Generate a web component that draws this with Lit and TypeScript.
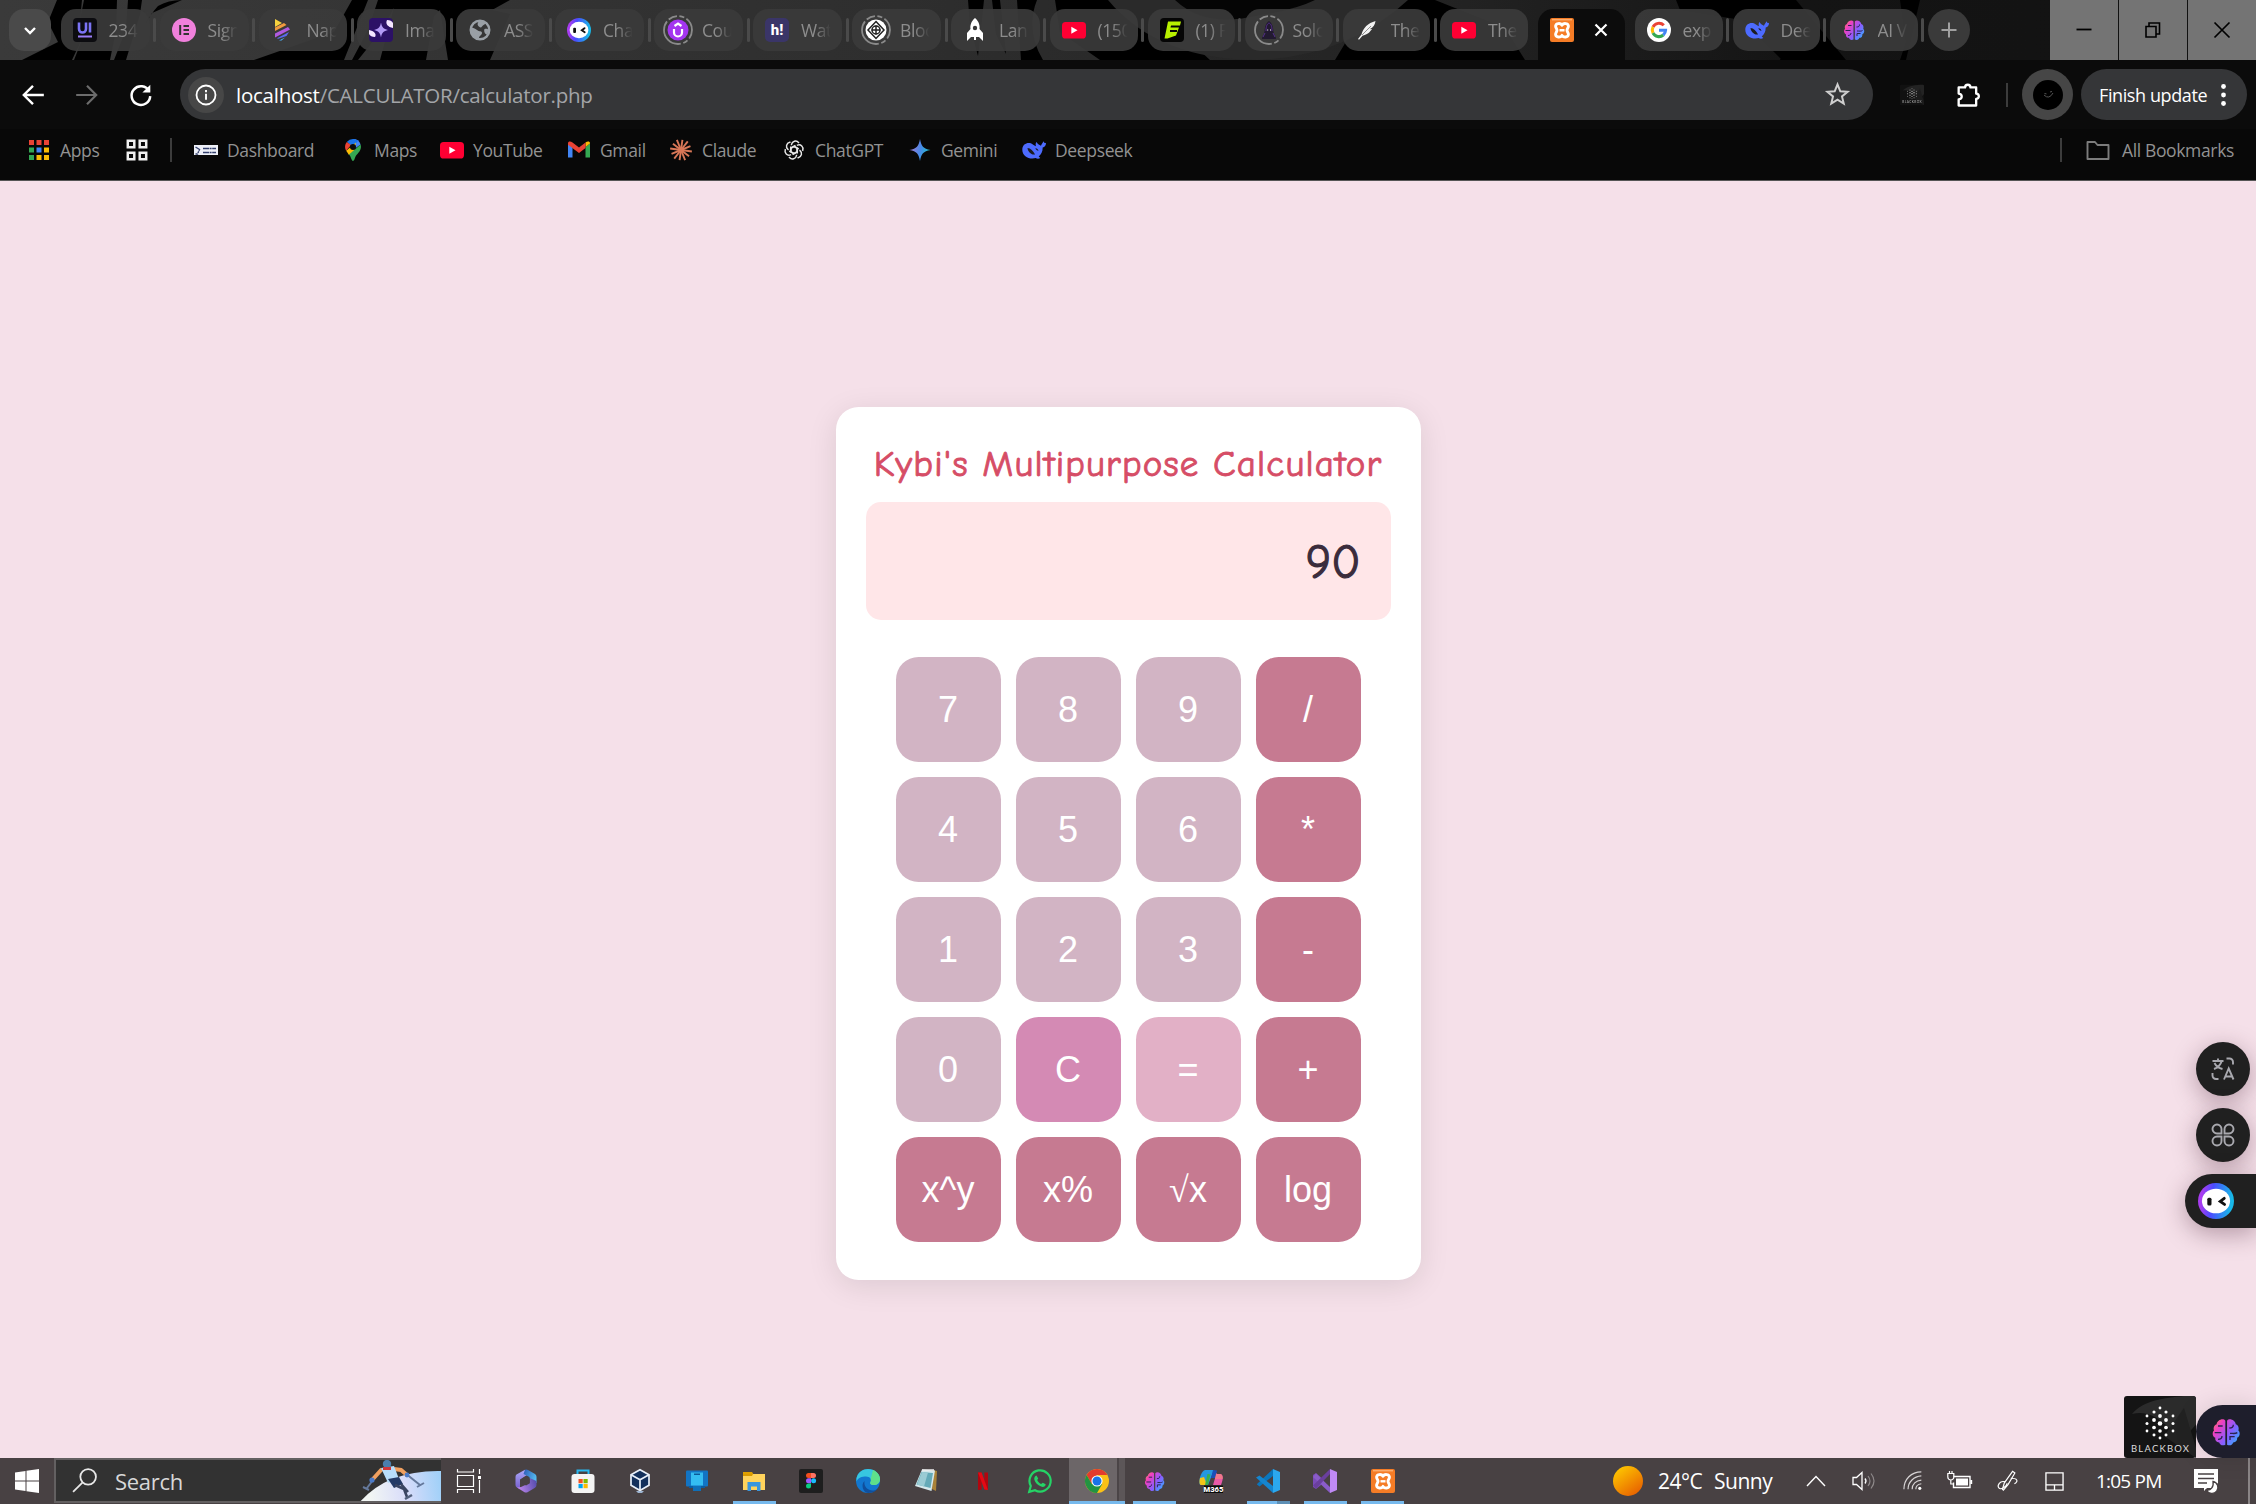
import { LitElement, html, svg, css, nothing, TemplateResult } from "lit";
import { customElement, state } from "lit/decorators.js";
import { classMap } from "lit/directives/class-map.js";
import { styleMap } from "lit/directives/style-map.js";

type Art = ReturnType<typeof svg>;

const icon = (art: Art, size = 24, box = "0 0 24 24"): TemplateResult =>
  html`<svg class="icon" width=${size} height=${size} viewBox=${box} fill="none">${art}</svg>`;

const xampp = svg`<rect width="24" height="24" rx="2" fill="#f57c26"/><path d="M2 1.800h20" stroke="#ffc08a" stroke-width="1"/>
  <path d="M12 7.200C10.500 4.800 6 5 5.600 8c-.2 1.800 1.400 2.600 1.400 4.300s-1.600 2.500-1.400 4.300c.4 3 4.900 3.200 6.400.8 1.500 2.400 6 2.200 6.400-.8.2-1.800-1.400-2.600-1.400-4.300S18.600 9.800 18.400 8c-.4-3-4.900-3.200-6.400-.8z" stroke="#fff" stroke-width="2.900" stroke-linejoin="round"/><path d="M9.500 12.300h5" stroke="#fff" stroke-width="2.400"/>`;
const youtube = svg`<rect x="0" y="4" width="24" height="16.500" rx="3.600" fill="#ff0033"/><path d="M9.300 8.700l6.200 3.500-6.200 3.500z" fill="#fff"/>`;
const whale = svg`<path d="M21.800 3.200c.3 1.900 1.400 2.200 2.200 1.500 0 2.800-1.300 4.400-3.300 4.900 0 4.300-1.500 7-4 8.800l1.600 1.500c-1.600 1.200-3.400.8-4.600.2C7.500 21.800.3 18.500.3 11.700.3 7 3.700 5 6.600 5c3.600 0 4.400 2.300 7.400 3.200-.8-1.800-.2-3.400.6-4.200.8 2 2.400 2.900 4.400 3.800.4-1.200 1.400-3 2.800-4.600z" fill="#4d6bfe"/><path d="M5.500 10c3.200.2 5.600 2.900 7.600 6.400-3.800.8-7.200-2.600-7.600-6.400zM13.300 10.300c1.700-.2 2.700.9 3.200 2.500-1.200.2-2.500-.9-3.200-2.500z" fill="#1c1c22"/>`;
const brain = svg`<defs><linearGradient id="br" x1="0" y1="3" x2="24" y2="20" gradientUnits="userSpaceOnUse"><stop stop-color="#ff9a3c"/><stop offset=".28" stop-color="#f03fc0"/><stop offset=".6" stop-color="#8a5cff"/><stop offset="1" stop-color="#20c0ff"/></linearGradient></defs>
  <path d="M11.500 3.500v18c-2.400 1.200-4.200-.2-4.600-1.700-2 0-3.300-1.400-2.900-3.400-2.200-1.200-2.600-4-1-5.600-.8-2.600.6-4.200 2-4.700.2-2.700 4.700-5.100 6.500-2.600zM12.800 3.500v18c2.400 1.200 4.200-.2 4.600-1.700 2 0 3.300-1.400 2.900-3.400 2.200-1.200 2.600-4 1-5.600.8-2.600-.6-4.200-2-4.700-.2-2.700-4.700-5.100-6.500-2.600z" fill="url(#br)"/>
  <path d="M3.500 12.500h5M6 7.500h3.500M6 17.500c2 0 3-1 3-2.500M14.500 9c2 0 3-.5 3-2.500M15 13c2.500 0 4 .5 5.500-.5M15 18v-2.500h3.500" stroke="#2b2350" stroke-width="1"/>`;
const face = svg`<defs><linearGradient id="fc" x1="2" y1="14" x2="22" y2="16" gradientUnits="userSpaceOnUse"><stop stop-color="#a83cf0"/><stop offset=".35" stop-color="#4a4cff"/><stop offset="1" stop-color="#18b8e8"/></linearGradient></defs>
  <circle cx="12" cy="12" r="12" fill="url(#fc)"/><ellipse cx="12" cy="12" rx="9.400" ry="8.200" fill="#fff"/><rect x="6.200" y="9.800" width="2.800" height="5.200" rx="1" fill="#111"/><path d="M17.500 10.200l-2.700 2.100 2.900 2" stroke="#111" stroke-width="1.900" stroke-linecap="round"/>`;
const ringed = (inner: Art) => svg`<circle cx="12" cy="12" r="14" stroke="#8a8a8a" stroke-width="1.800" stroke-dasharray="9 2.500 5 2.500 34 2.500"/>${inner}`;
const label = (x: number, y: number, size: number, fill: string, t: string) =>
  svg`<text x=${x} y=${y} font-size=${size} fill=${fill} font-family="Roboto, sans-serif" font-weight="800" text-anchor="middle">${t}</text>`;

interface Tab { text: string; art: Art; w: number; active?: boolean; after?: boolean }
const tabs: Tab[] = [
  { text: "234", w: 99, art: svg`<rect width="24" height="24" rx="4" fill="#0c0c10"/><path d="M6 4.500V11a3.500 3.500 0 0 0 7 0V4.500M17 4.500v10" stroke="#7b74f5" stroke-width="2.600"/><path d="M5 18.500h14" stroke="#9a7df8" stroke-width="2.200"/>` },
  { text: "Sign", w: 99, art: svg`<circle cx="12" cy="12" r="12" fill="#f080dc"/><path d="M8.200 7v10M11.500 8H17M11.500 12H17M11.500 16H17" stroke="#333" stroke-width="2"/>` },
  { text: "Nap", w: 98.5, art: svg`<path d="M4 1l7 4-7 4z" fill="#f7d23e"/><path d="M4 9.500l9-4.500 2.500 2L4 13z" fill="#f09a3e"/><path d="M4 15.500l13-6.500 2 2.500L4 19.500z" fill="#b05ae0"/><path d="M6.500 20L18 14l-2.500 4-9 3z" fill="#5a6af0"/><path d="M8 22.500l6-3-3.500 3z" fill="#49b6ff"/>` },
  { text: "Ima", w: 99, art: svg`<rect width="24" height="24" rx="4" fill="#2c1166"/><path d="M0 12c5 1 8 4 6 7-3 0-5-1-6-3zM24 10c-5-1-8-4-6-8 3 0 5 1 6 3z" fill="#f4e6ff"/><path d="M12 4.500c1 5 2.500 6.500 7 7.500-4.500 1-6 2.500-7 7.500-1-5-2.500-6.500-7-7.500 4.500-1 6-2.500 7-7.500z" fill="#b39af5"/>` },
  { text: "ASS", w: 99, art: svg`<circle cx="12" cy="12" r="9.300" stroke="#9aa0a6" stroke-width="2.400"/><path d="M3 9c2 1.500 4 1 6 3s5 .5 5 3-3.500 2.500-3 6c-5 0-9-4-8-12zM11 3c3 0 5 .5 7 2-1 2-3 1.500-4 3.500S11 9 10 7.500 10 4.500 11 3zM16.500 11c2-.5 4 0 4.500 1.500l-2 4c-2 0-3.500-3.500-2.500-5.500z" fill="#9aa0a6"/>` },
  { text: "Chat", w: 99, art: face },
  { text: "Cou", w: 99, art: ringed(svg`<circle cx="12" cy="12" r="10.500" fill="#a435f0"/><path d="M8 11v3.500a4 4 0 0 0 8 0V11M8.500 8L12 5.600 15.500 8" stroke="#fff" stroke-width="2.200"/>`) },
  { text: "Wat", w: 99, art: svg`<rect width="24" height="24" rx="5" fill="#3a3568"/>${label(12, 17, 15, "#fff", "h!")}` },
  { text: "Bloc", w: 99, art: ringed(svg`<circle cx="12" cy="12" r="10.500" fill="#fff"/><path d="M12 3.500l8 8.500-8 8.500L4 12zM12 7.500v9M7.500 12h9" stroke="#222" stroke-width="1.500"/><circle cx="12" cy="12" r="4" stroke="#222" stroke-width="1.500"/>`) },
  { text: "Land", w: 98.5, art: svg`<path d="M12 0c4 3.500 5 7.500 4.500 11l3.500 4v8l-4-4H8l-4 4v-8l3.500-4C7 7.500 8 3.500 12 0z" fill="#fff"/><circle cx="12" cy="10" r="2.200" fill="#383838"/><path d="M12 16v6" stroke="#fff" stroke-width="2"/>` },
  { text: "(150", w: 98, art: youtube },
  { text: "(1) F", w: 97, art: svg`<rect width="24" height="24" rx="4" fill="#050505"/><path d="M8 3.500h13l-1 4h-9l-.5 2h8.500l-3 8-8.500 3h-3z" fill="#b8f000"/><path d="M10 13h7" stroke="#050505" stroke-width="2"/>` },
  { text: "Solo", w: 98, art: ringed(svg`<path d="M5 21c0-3 2-4 2.500-7.500C8 8 9 5 12 3c3 2 4 5 4.500 10.500C17 17 19 18 19 21z" fill="#221a30"/><path d="M9 13c0-5 1-7 3-8 2 1 3 3 3 8M6 19l2-4M18 19l-2-4" stroke="#56308a" stroke-width="1"/><path d="M10.200 12h1M13 12h1" stroke="#fff" stroke-width="1.200"/>`) },
  { text: "The", w: 97.5, art: svg`<path d="M20.500 3C13 5 8 10 6.500 16.500L3 21l1 .8 3.500-4C14 16 15 13.500 17 11c-1 .2-2 .2-2 0 3-1.500 5-4 5.500-8z" fill="#f2f2f2"/><path d="M7 17L16 8" stroke="#777" stroke-width=".8"/>` },
  { text: "The", w: 98, art: youtube, after: true },
  { text: "", w: 96.5, art: xampp, active: true, after: true },
  { text: "exp", w: 98, art: svg`<circle cx="12" cy="12" r="12" fill="#fff"/><path d="M16.800 7.300A6.700 6.700 0 0 0 6 9" stroke="#ea4335" stroke-width="3"/><path d="M6 9a6.700 6.700 0 0 0 0 6" stroke="#fbbc05" stroke-width="3"/><path d="M6 15a6.700 6.700 0 0 0 10.300 2" stroke="#34a853" stroke-width="3"/><path d="M16.300 17a6.700 6.700 0 0 0 2.300-4.800H12" stroke="#4285f4" stroke-width="3"/>` },
  { text: "Dee", w: 97, art: whale },
  { text: "AI V", w: 98, art: brain },
];

const appsArt = svg`${["#ea4335", "#ea4335", "#ea4335", "#34a853", "#4285f4", "#fbbc05", "#34a853", "#fbbc05", "#fbbc05"].map(
  (c, i) => svg`<rect x=${2 + (i % 3) * 7.500} y=${2 + Math.floor(i / 3) * 7.500} width="5" height="5" fill=${c}/>`)}`;

interface Mark { text: string; w: number; art: Art }
const marks: Mark[] = [
  { text: "Dashboard", w: 147, art: svg`<rect y="7" width="24" height="10" fill="#eef0f8"/><path d="M1.500 9l4 2.500-2 4.500H1.500M9 10.500h13M9 14.500h13" stroke="#34406e" stroke-width="1.400" stroke-dasharray="6 .6 2 .6"/>` },
  { text: "Maps", w: 99, art: svg`<path d="M12 1a8 8 0 0 1 7.600 5.400L12 12z" fill="#4285f4"/><path d="M12 1a8 8 0 0 0-6.200 2.900L12 9l5-6.200A8 8 0 0 0 12 1z" fill="#1a73e8"/><path d="M5.800 3.900C3.400 7 3.800 10.500 5.200 12.700L10 7z" fill="#ea4335"/><path d="M5.200 12.700L15 4.500l-2 10-5 2.500z" fill="#fbbc04"/><path d="M19.600 6.400C21 11 18 14 15.500 17c-1.700 2-2 6-3.500 6s-1.700-4-4-6.500z" fill="#34a853"/><circle cx="12" cy="9" r="3" fill="#0a0a0a"/>` },
  { text: "YouTube", w: 127, art: youtube },
  { text: "Gmail", w: 102, art: svg`<path d="M1 5.500v14h4.500V9z" fill="#4285f4"/><path d="M23 5.500v14h-4.500V9z" fill="#34a853"/><path d="M18.500 9L23 5.500C23 3 20.500 3 18.500 4.500z" fill="#fbbc04"/><path d="M1 5.500C1 3 3.500 3 5.500 4.500L12 9.500l6.500-5V10L12 15 1 6.700z" fill="#ea4335"/>` },
  { text: "Claude", w: 113, art: svg`${[0, 30, 60, 90, 120, 150, 180, 210, 240, 270, 300, 330].map(a => svg`<path d="M12 12V${a % 60 ? 1 : 1.800}" transform="rotate(${a + 8} 12 12)" stroke="#d97757" stroke-width="1.900"/>`)}` },
  { text: "ChatGPT", w: 126, art: svg`${[0, 60, 120, 180, 240, 300].map(a => svg`<path d="M12 8.500l3.300 1.900v5.200M9.500 7.200V6.500a4 4 0 0 1 7-2l.5.600" transform="rotate(${a} 12 12)" stroke="#e8e8e8" stroke-width="1.500"/>`)}` },
  { text: "Gemini", w: 114, art: svg`<defs><linearGradient id="gm" x1="2" y1="10" x2="22" y2="14" gradientUnits="userSpaceOnUse"><stop stop-color="#a07ad0"/><stop offset=".5" stop-color="#4a88e8"/><stop offset="1" stop-color="#1cc0c8"/></linearGradient></defs><path d="M12 1c1.300 7.300 3.200 9.600 10.500 11C15.200 13.400 13.300 15.700 12 23c-1.300-7.300-3.200-9.600-10.500-11C8.800 10.600 10.700 8.300 12 1z" fill="url(#gm)"/>` },
  { text: "Deepseek", w: 130, art: whale },
];

interface Pin { art: Art; bar?: boolean; cls?: string; size?: number }
const pins: Pin[] = [
  { art: svg`<path d="M.5 0v3h16V0M.5 6.500h16v11H.5zM.5 24v-3.500h16V24M22.500 0v5M22.500 11v13" stroke="#fff" stroke-width="1.200"/><rect x="21" y="7" width="3" height="3" fill="#fff"/>` },
  { art: svg`<defs><linearGradient id="ca" x1="6" y1="2" x2="6" y2="22" gradientUnits="userSpaceOnUse"><stop stop-color="#a9a4f5"/><stop offset="1" stop-color="#6f55c8"/></linearGradient><linearGradient id="cb" x1="9" y1="4" x2="23" y2="10" gradientUnits="userSpaceOnUse"><stop stop-color="#2f5fb8"/><stop offset="1" stop-color="#58c4f5"/></linearGradient><linearGradient id="cc" x1="3" y1="20" x2="22" y2="14" gradientUnits="userSpaceOnUse"><stop stop-color="#c58af0"/><stop offset="1" stop-color="#5a4fb0"/></linearGradient></defs>
    <path d="M11 .8L2.500 5.500Q1.500 6.200 1.500 8v8q0 1.800 1.500 2.600l3 1.600V10.500l7-4.500z" fill="url(#ca)"/><path d="M11 .8q1.500-.6 3 .2l7 4q1.500 1 1.500 2.800V14l-7-4.500V8L9.500 5z" fill="url(#cb)"/><path d="M22.500 12v4q0 1.800-1.500 2.700l-7.500 4.500q-1.500.7-3 0L3 18.600l4-.6 8.500-4V9z" fill="url(#cc)"/><path d="M12 7.300l3.800 2.300v4.700L12 16.600l-3.800-2.300V9.600z" fill="#484143"/>` },
  { art: svg`<path d="M6.500 7V1.500h11V7" stroke="#28b8f0" stroke-width="2"/><rect x=".5" y="5" width="23" height="19" rx="3" fill="#f4f4f4"/><rect x="7.500" y="10" width="4.200" height="4.200" fill="#f25022"/><rect x="12.500" y="10" width="4.200" height="4.200" fill="#7fba00"/><rect x="7.500" y="15" width="4.200" height="4.200" fill="#00a4ef"/><rect x="12.500" y="15" width="4.200" height="4.200" fill="#ffb900"/>` },
  { art: svg`<path d="M12 .8l9 5v10.400L12 21.500l-9-5.300V5.800z" fill="#12305c" stroke="#e8f0fa" stroke-width="1.700"/><path d="M3 5.800l9 5 9-5M12 10.800v10.700" stroke="#e8f0fa" stroke-width="1.700"/><path d="M8 22h8l-2 2h-4z" fill="#9db4d0"/>` },
  { art: svg`<rect x="1" y="1.500" width="22" height="16" rx="1" fill="#1274c4"/><rect x="4" y="17" width="16" height="2" fill="#0c5ca0"/><rect x="6" y="3.500" width="12" height="13" fill="#34bdf2"/><rect x="9" y="4.500" width="6" height="1.500" fill="#0b5a9a"/><rect x="8" y="17" width="8" height="5" fill="#0f6fb8"/>` },
  { bar: true, art: svg`<path d="M1 3h9l2 3H1z" fill="#e0a000"/><path d="M1 5h22v16H1z" fill="#ffd35c"/><path d="M1 5h10l-1 2H1z" fill="#d99a00"/><path d="M5.500 22v-9h13v9H15v-4.500H9V22z" fill="#3a96dd"/>` },
  { art: svg`<rect width="24" height="24" rx="2" fill="#1e1e1e"/><path d="M12 4H9.500a2.500 2.500 0 0 0 0 5H12z" fill="#f24e1e"/><path d="M12 4h2.500a2.500 2.500 0 0 1 0 5H12z" fill="#ff7262"/><path d="M12 9.300H9.500a2.500 2.500 0 0 0 0 5H12z" fill="#a259ff"/><circle cx="14.600" cy="11.800" r="2.500" fill="#1abcfe"/><path d="M12 14.600H9.500a2.500 2.500 0 1 0 2.500 2.500z" fill="#0acf83"/>` },
  { art: svg`<circle cx="12" cy="12" r="12" fill="#1277cf"/><path d="M.5 9C2 3 7 0 12 0c7 0 12 5 12 10 0 4-3 6-6 6-3.500 0-4.500-1.500-3.500-3 1.500-2.500-.5-5.500-4.500-5.500-4 0-8 1-9.500 5z" fill="#37c6e0"/><path d="M17 1c4.500 2 7 5.500 7 9 0 4-3 6-6 6-3.500 0-4.500-1.500-3.500-3 .5-1 .6-2 .2-3z" fill="#5fe08a"/><path d="M8.500 12c-1 6 4 10 9 9.500 2-.2 3.500-1 4.500-2C19.500 22.500 16 24 12 24c-5 0-7.500-9-3.500-12z" fill="#104f9c"/>` },
  { art: svg`<path d="M19 1l4 1-1 20-4-2z" fill="#a98238"/><path d="M8 .5l13 1L17.500 22 1 17z" fill="#d5e8ec"/><path d="M7.500 3l11.500 1-2.500 15L2.500 15.500z" fill="#64aab8"/><path d="M8 3l6 .5-4 14-7-2z" fill="#9acbd4"/><path d="M8 1h12" stroke="#eee" stroke-width="1.500"/>` },
  { art: svg`<path d="M7 3.500h3.600v17L7 21zM13.400 3.500H17V21l-3.600-.5z" fill="#b1060f"/><path d="M7 3.500h3.600L17 21l-3.600-.5z" fill="#e50914"/>` },
  { art: svg`<path d="M1.200 22.800l1.600-5.800a10.600 10.600 0 1 1 4.200 4.200z" stroke="#25d366" stroke-width="2.200"/><path d="M8.500 6.500l1.700 3-1 1.600c.8 1.900 2 3 3.900 3.900l1.700-1.300 2.900 1.600c-.2 2.600-2.500 3-4.600 2.300-3.500-1.200-6-3.900-6.800-7-.3-1.700.6-3.900 2.200-4.100z" fill="#25d366"/>` },
  { bar: true, cls: "on", art: svg`<circle cx="12" cy="12" r="12" fill="#fbc116"/><path d="M1.600 6A12 12 0 0 1 22.400 6H12l-5.200 9z" fill="#e33b2e"/><path d="M1.600 6A12 12 0 0 0 12 24l5.200-9L12 12 6.800 15z" fill="#229342"/><circle cx="12" cy="12" r="5.600" fill="#fff"/><circle cx="12" cy="12" r="4.500" fill="#1a73e8"/>` },
  { bar: true, art: brain, size: 23 },
  { art: svg`<path d="M6 1h9l-6 15H1C-1 12 2 2 6 1z" fill="#2498e0"/><path d="M1 9l4-1 3 8H2c-1.500 0-2-3-1-7z" fill="#f2c418"/><path d="M8.500 5l3 .5L9 16H6z" fill="#38b04c"/><path d="M15 1l3 4h3c3 0 3.500 4 2 8l-1 3h-8l3-10z" fill="#e85aa8"/><path d="M14 1l4 .5L16 9h-4z" fill="#1a4fb8"/><path d="M17 5h4c2 0 3 2 2.500 5H16z" fill="#f0788a"/><rect x="5" y="16.500" width="19" height="7.500" fill="#0a0a0a"/>${label(14.500, 23, 7.600, "#fff", "M365")}` },
  { bar: true, cls: "split", art: svg`<path d="M17 0l7 3v18l-7 3z" fill="#2ba8ef"/><path d="M17 0v7L3.500 17.500 1 15.500 1 15z" fill="#0a76bd"/><path d="M17 24v-7L3.500 6.500 0 8.500z" fill="#1585cf"/>` },
  { bar: true, art: svg`<path d="M0 6l3-2 5 4.500V16l-5 4-3-2z" fill="#7a4bb8"/><path d="M3 4.500L20 21l-3 3L0 8z" fill="#8a5cc8"/><path d="M3 19.500L17 5V0L0 16.500z" fill="#6a3f9e"/><path d="M17 0l7 3v18l-7 3z" fill="#c08af5"/>` },
  { bar: true, art: xampp },
];

const keys: { t: string; k: string }[] = [
  ..."789".split("").map(t => ({ t, k: "num" })), { t: "/", k: "op" },
  ..."456".split("").map(t => ({ t, k: "num" })), { t: "*", k: "op" },
  ..."123".split("").map(t => ({ t, k: "num" })), { t: "-", k: "op" },
  { t: "0", k: "num" }, { t: "C", k: "clear" }, { t: "=", k: "eq" }, { t: "+", k: "op" },
  { t: "x^y", k: "op" }, { t: "x%", k: "op" }, { t: "√x", k: "op" }, { t: "log", k: "op" },
];

const blackbox = svg`<rect width="72" height="62" rx="3" fill="#141414"/><path d="M8 18C20 4 40 2 60 0h9q3 0 3 3v25C50 60 44 10 8 18z" fill="#2b2b2b"/><path d="M40 40L60 12l12 40v10z" fill="#222"/>
  ${[[36, 12], [30, 16], [42, 16], [36, 20], [23, 20], [49, 20], [30, 24], [42, 24], [36, 27.500], [23, 27.500], [49, 27.500], [30, 31.500], [42, 31.500], [36, 35], [23, 35], [49, 35], [30, 39], [42, 39], [36, 42]].map(
    ([x, y]) => svg`<circle cx=${x} cy=${y} r=${2.300 - Math.hypot(x - 36, y - 27) * 0.06} fill="#fff"/>`)}
  <text x="36" y="55.500" font-size="9.500" fill="#ddd" font-family="Lato, sans-serif" text-anchor="middle" textLength="58">BLACKBOX</text>`;

@customElement("app-root")
export class AppRoot extends LitElement {
  @state() private shown = "90";

  static styles = css`
    :host { display: block; width: 2256px; height: 1504px; overflow: hidden; font-family: "Segoe UI", "Open Sans", "Noto Sans", sans-serif; }
    * { box-sizing: border-box; }
    svg { display: block; flex: none; overflow: visible; }
    .screen { display: flex; flex-direction: column; width: 2256px; height: 1504px; background: #f5e0e9; position: relative; }
    .strip { height: 60px; background: #1c1c1c; position: relative; flex: none; }
    .strip > .bg { position: absolute; left: 0; top: 0; }
    .row { position: relative; display: flex; height: 60px; padding: 0 0 0 9px; }
    .drop { width: 42px; height: 42px; margin: 9px 9.500px 0 0; border-radius: 15px; background: #4a4a4a; display: grid; place-items: center; }
    .tab { height: 60px; padding-top: 9px; display: flex; flex: none; }
    .pill { flex: 1; height: 42px; border-radius: 15px; background: rgba(58, 58, 58, .93); display: flex; align-items: center; padding-left: 12px; gap: 12px; overflow: hidden; }
    .cap { width: 31px; overflow: hidden; white-space: nowrap; color: #8d8d8d; font-size: 17.500px; letter-spacing: -.4px; -webkit-mask-image: linear-gradient(90deg, #000 45%, transparent 96%); mask-image: linear-gradient(90deg, #000 45%, transparent 96%); }
    .sep { width: 10px; height: 42px; display: flex; align-items: center; justify-content: center; }
    .sep i { width: 3px; height: 24px; border-radius: 2px; background: #4a4a4a; }
    .tab.active .pill { background: #0c0c0c; height: 51px; border-radius: 15px 15px 0 0; padding-bottom: 9px; gap: 15px; }
    .plus { width: 42px; height: 42px; margin-top: 9px; border-radius: 50%; background: #3a3a3a; display: grid; place-items: center; }
    .win { margin-left: auto; display: flex; gap: 1px; width: 206px; background: #111; }
    .win span { flex: 1; background: #747474; display: grid; place-items: center; }
    .bar { height: 69px; background: #0b0b0b; display: flex; align-items: center; padding: 9px 0 9px 20px; flex: none; }
    .bar > svg { margin-right: 28px; }
    .url { margin-left: -2px; width: 1693px; height: 51px; border-radius: 26px; background: #353638; display: flex; flex: none; align-items: center; padding: 0 23px 0 8px; color: #a3a5a8; font-size: 20.500px; letter-spacing: -.25px; }
    .url b { font-weight: 400; color: #fff; }
    .info { width: 36px; height: 36px; border-radius: 50%; background: #474747; display: grid; place-items: center; margin-right: 12px; }
    .grow { flex: 1; }
    .tools { display: flex; align-items: center; flex: none; }
    .tools .ext { margin-left: 27px; }
    .tools .puz { margin-left: 30px; }
    .tools .vline { margin-left: 24px; }
    .vline { width: 2px; height: 24px; background: #3c3c3c; flex: none; }
    .ava { width: 51px; height: 51px; border-radius: 50%; background: #464646; display: grid; place-items: center; margin-left: 14px; }
    .upd { width: 166px; height: 51px; margin-left: 8px; border-radius: 26px; background: #353638; color: #fff; font-size: 18px; letter-spacing: -.4px; display: flex; align-items: center; justify-content: space-between; padding: 0 21px 0 18px; white-space: nowrap; }
    .marks { height: 52px; background: #080808; border-bottom: 1px solid #555; display: flex; align-items: center; padding: 0 22px 9px 27px; color: #929292; font-size: 17.500px; letter-spacing: -.35px; flex: none; }
    .marks > .split { margin: 0 22px 0 20px; }
    .mark { display: flex; align-items: center; gap: 9px; white-space: nowrap; flex: none; }
    .mark.all { margin-left: 24px; gap: 12px; }
    .page { flex: 1; display: flex; justify-content: center; background: #f5e0e9; min-height: 0; }
    .card { width: 585px; height: 873px; margin-top: 226px; border-radius: 22.500px; background: #fff; box-shadow: 0 6px 30px rgba(0, 0, 0, .1); padding: 30px; display: flex; flex-direction: column; }
    h1 { margin: 0 -10px; height: 65px; text-align: center; font: 400 37px/55px "Comic Sans MS", "Comic Neue", "Noto Sans", sans-serif; color: #d64d66; -webkit-text-stroke: .9px #d64d66; white-space: nowrap; letter-spacing: 1.170px; }
    .out { height: 118px; border-radius: 15px; background: #ffe6e8; color: #3a2c3c; font: 400 48px/118px "Comic Sans MS", "Comic Neue", "Noto Sans", sans-serif; -webkit-text-stroke: 1.200px #3a2c3c; text-align: right; padding: 2px 30px 0; }
    .pad { display: grid; grid-template-columns: repeat(4, 105px); grid-auto-rows: 105px; gap: 15px; padding: 37px 30px 0; }
    .pad button { border: 0; padding: 0; border-radius: 22.500px; color: #fff; font: 36px Arial, "Liberation Sans", sans-serif; }
    .root { font-family: "Liberation Serif", serif; line-height: 1; }
    .num { background: #d2b4c4; } .op { background: #c67a91; } .clear { background: #d48ab4; } .eq { background: #e2b0c6; }
    .float { position: absolute; right: 0; top: 1042px; display: flex; flex-direction: column; align-items: flex-end; gap: 12px; }
    .round { width: 54px; height: 54px; border-radius: 50%; background: #202020; margin-right: 6px; display: grid; place-items: center; box-shadow: 0 6px 24px rgba(60, 20, 40, .35); }
    .chat { width: 71px; height: 54px; border-radius: 27px 0 0 27px; background: #202020; display: flex; align-items: center; padding-left: 13px; box-shadow: 0 6px 24px rgba(60, 20, 40, .35); }
    .corner { position: absolute; right: 0; top: 1396px; height: 62px; display: flex; align-items: flex-end; }
    .lobe { width: 60px; height: 53px; border-radius: 27px 0 0 27px; background: #1e1e2c; padding: 11px 0 0 14px; box-shadow: 0 0 24px rgba(0, 0, 0, .12); }
    .task { height: 46px; background: #484143; display: flex; flex: none; color: #fff; position: relative; }
    .start { width: 54px; display: grid; place-items: center; }
    .search { width: 387px; height: 45px; border: 2px solid #636061; border-right-width: 0; background: #323232; display: flex; align-items: center; padding-left: 16px; gap: 18px; color: #d8d8d8; font-size: 22px; letter-spacing: -.3px; overflow: hidden; }
    .search .ski { margin-left: auto; }
    .pins { display: grid; grid-template-columns: repeat(17, 57.140px); margin-left: -1px; }
    .pin { height: 46px; display: grid; place-items: center; position: relative; }
    .pin.on { background: linear-gradient(90deg, #6c6668 48px, #4b4547 48px 50px, #5c5658 50px); margin: 0 1px 0 1px; }
    .pin.lit::after { content: ""; position: absolute; left: 7px; right: 7px; bottom: 0; height: 3px; background: #76b9ed; }
    .pin.on::after { left: 0; right: 0; }
    .pin.split::after { background: linear-gradient(90deg, #76b9ed 30px, #5d8fb5 30px); }
    .tray { position: absolute; right: 0; top: 0; width: 643px; height: 46px; display: grid; grid-template-columns: 45px 56px 92px 46px 51px 44px 50px 48px 51px 98px 54px 1fr; align-items: center; font-size: 20px; white-space: nowrap; }
    .tray .big { font-size: 21px; letter-spacing: -.5px; }
    .tray .time { font-size: 19px; letter-spacing: -.8px; }
    .tray .edge { width: 2px; height: 46px; background: #8a8586; }
  `;

  private strip() {
    return html`<div class="strip">
      <svg class="bg" width="2256" height="60" viewBox="0 0 2256 60">
        <defs><linearGradient id="sg"><stop stop-color="#3a3a3a"/><stop offset=".4" stop-color="#2e2e2e"/><stop offset=".65" stop-color="#222"/><stop offset=".8" stop-color="#141414"/><stop offset="1" stop-color="#121212"/></linearGradient></defs>
        <rect width="2256" height="60" fill="url(#sg)"/>
        <path d="M57 0h25l-2 20 4-20h33l-1 30-6 30H74l12-30-14 30H22l36-18-10-20zM128 0h14l-2 14-14 46h-12l12-30zM158 6q10-6 24-6l-30 13-6 10q4-8 12-17zM352 0h16l-24 60h-90l80-28zM378 0h20l-16 30-24 30h-6l16-30zM396 0h114l-18 10 18 4-20 46h-42l-8-50-6 6-8 44h-46z" fill="#000"/>
        <path d="M968 0h16l-6 56-8-30zM992 0h8l6 54-10-20zM1017 0h20q-12 30 6 60h-22zM1055 0h120l-20 10 55 50h-110l-40-28zM1360 0h75l70 28 20 32h-190q20-30 25-60zM1676 0h120l50 60h-64l-40-40-62-10zM1780 60l12-26 40 26zM1900 60l6-18-6-42h20l-14 60z" fill="#000"/>
        <path d="M1108 0q50 60 150 60 90-4 150-60z" fill="#2a2a2a"/><path d="M1175 0q30 28 80 16 40-6 60-16z" fill="#050505"/>
      </svg>
      <div class="row">
        <div class="drop">${icon(svg`<path d="M7 10l5 5 5-5" stroke="#fff" stroke-width="2.400"/>`)}</div>
        ${tabs.map(t => html`<div class=${classMap({ tab: true, active: !!t.active })} style=${styleMap({ width: `${t.w}px` })}>
          <div class="pill">${icon(t.art)}${t.active
            ? icon(svg`<path d="M6.500 6.500l11 11M17.500 6.500l-11 11" stroke="#fff" stroke-width="2.200"/>`)
            : html`<span class="cap">${t.text}</span>`}</div>
          <div class="sep">${t.after ? nothing : html`<i></i>`}</div></div>`)}
        <div class="plus">${icon(svg`<path d="M12 4.500v15M4.500 12h15" stroke="#a0a0a0" stroke-width="2"/>`)}</div>
        <div class="win">
          <span>${icon(svg`<path d="M4.500 11.500h15" stroke="#000" stroke-width="1.800"/>`)}</span>
          <span>${icon(svg`<path d="M5 8.500h10V19H5zM8 8V5h10.500v11H15.500" stroke="#000" stroke-width="1.600"/>`)}</span>
          <span>${icon(svg`<path d="M4.500 4.500l15 15M19.500 4.500l-15 15" stroke="#000" stroke-width="1.700"/>`)}</span>
        </div>
      </div></div>`;
  }

  private toolbar() {
    return html`<div class="bar">
      ${icon(svg`<path d="M22 12H4M12 3.500L3.500 12l8.500 8.500" stroke="#fff" stroke-width="2.200"/>`, 26)}
      ${icon(svg`<path d="M2 12h18M12 3.500l8.500 8.500-8.500 8.500" stroke="#6c6c6c" stroke-width="2"/>`, 26)}
      ${icon(svg`<path d="M19.500 8.500A8.600 8.600 0 1 0 20.500 13" stroke="#fff" stroke-width="2.300"/><path d="M20.600 2.500v7.300h-7.300z" fill="#fff"/>`, 26)}
      <div class="url"><div class="info">${icon(svg`<circle cx="12" cy="12" r="9.500" stroke="#fff" stroke-width="1.800"/><path d="M12 10.800v6M12 7v2.200" stroke="#fff" stroke-width="1.900"/>`)}</div>
        <b>localhost</b><span>/CALCULATOR/calculator.php</span><span class="grow"></span>
        ${icon(svg`<path d="M12 2.200l2.700 6.700 7 .5-5.400 4.500 1.700 6.900-6-3.800-6 3.800 1.700-6.900L2.300 9.400l7-.5z" stroke="#cfcfcf" stroke-width="1.900"/>`, 25)}
      </div>
      <div class="tools">
        <svg class="ext" width="24" height="24" viewBox="0 0 72 72"><g opacity=".75" transform="translate(0 5)">${blackbox}</g></svg>
        <svg class="puz" width="28" height="28" viewBox="0 0 24 24" fill="none"><path d="M4 5.500h5.500a2.300 2.300 0 0 1 4.600 0H19v5.300a2.300 2.300 0 0 1 0 4.600V21H4v-5.300c3.500-.5 3.500-4.400 0-4.900z" stroke="#fff" stroke-width="2" stroke-linejoin="round"/></svg>
        <span class="vline"></span>
        <div class="ava">${icon(svg`<circle cx="15" cy="15" r="15" fill="#000"/><path d="M11 15q5 5 9-2M11.500 13.500l2 .4M17 12l2-.5" stroke="#555" stroke-width="1"/>`, 30, "0 0 30 30")}</div>
        <div class="upd"><span>Finish update</span><svg width="5" height="22" viewBox="0 0 5 22"><g fill="#fff"><circle cx="2.500" cy="2.500" r="2.400"/><circle cx="2.500" cy="11" r="2.400"/><circle cx="2.500" cy="19.500" r="2.400"/></g></svg></div>
      </div></div>
      <div class="marks">
        <div class="mark" style=${styleMap({ width: "97px" })}>${icon(appsArt)}<span>Apps</span></div>
        ${icon(svg`<path d="M3.500 3.500h6v6h-6zM14.500 3.500h6v6h-6zM3.500 14.500h6v6h-6zM14.500 14.500h6v6h-6z" stroke="#f0f0f0" stroke-width="2.300"/>`, 26)}
        <span class="vline split"></span>
        ${marks.map(m => html`<div class="mark" style=${styleMap({ width: `${m.w}px` })}>${icon(m.art)}<span>${m.text}</span></div>`)}
        <span class="grow"></span><span class="vline"></span>
        <div class="mark all">${icon(svg`<path d="M1.500 4h7.500l2.500 3h11v14h-21z" stroke="#7c7c7c" stroke-width="1.900" stroke-linejoin="round"/>`)}<span>All Bookmarks</span></div>
      </div>`;
  }

  private taskbar() {
    const w = "#fff";
    return html`<div class="task">
      <div class="start">${icon(svg`<path d="M0 3.500L10.500 2v9.500H0zM11.500 1.800L24 0v11.500H11.500zM0 12.500h10.500V22L0 20.500zM11.500 12.500H24V24l-12.500-1.800z" fill="#fff"/>`)}</div>
      <div class="search">${icon(svg`<circle cx="15.500" cy="8.500" r="7.500" stroke="#e8e8e8" stroke-width="1.700"/><path d="M10 14L1 23" stroke="#e8e8e8" stroke-width="1.700"/>`, 25)}<span>Search</span>
        <svg class="ski" width="82" height="41" viewBox="0 0 82 41" fill="none">
          <defs><linearGradient id="sn" x1="10" y1="30" x2="82" y2="20" gradientUnits="userSpaceOnUse"><stop stop-color="#f2f6f4"/><stop offset=".5" stop-color="#d8dcfa"/><stop offset="1" stop-color="#9fd0f8"/></linearGradient></defs>
          <path d="M0 43Q28 10 82 11v32z" fill="url(#sn)"/>
          <path d="M14 20L8 28M4 27l6 3M46 13l15 12M58 27l7-4" stroke="#65799c" stroke-width="2"/>
          <path d="M23 9L14 19M35 9l7 1 6 5" stroke="#f0a060" stroke-width="4"/>
          <path d="M22 8l13-2 5 13-11 4z" fill="#b8ddfa"/><path d="M29 19l11-2 4 7-9 4z" fill="#243a66"/><path d="M36 25l9 4 3 8M42 24l7 8" stroke="#3a4562" stroke-width="2.600"/><path d="M46 39l7-4" stroke="#52607c" stroke-width="2.500"/>
          <circle cx="28" cy="4" r="4.200" fill="#4b7fae"/><path d="M24 7h8v3h-8z" fill="#d0383c"/><circle cx="13" cy="20" r="2.600" fill="#4a7ac8"/><circle cx="48" cy="15" r="2.400" fill="#4a7ac8"/>
        </svg></div>
      <div class="pins">${pins.map(p => html`<div class=${`pin ${p.bar ? "lit" : ""} ${p.cls ?? ""}`}>${icon(p.art, p.size ?? 24)}</div>`)}</div>
      <div class="tray">
        ${icon(svg`<defs><linearGradient id="su" x1="4" y1="0" x2="26" y2="30" gradientUnits="userSpaceOnUse"><stop stop-color="#ffcc00"/><stop offset="1" stop-color="#e65a00"/></linearGradient></defs><circle cx="15" cy="15" r="15" fill="url(#su)"/>`, 30, "0 0 30 30")}
        <span class="big">24°C</span><span class="big">Sunny</span>
        ${icon(svg`<path d="M1 15l9-9.500L19 15" stroke=${w} stroke-width="1.400"/>`, 20, "0 0 20 20")}
        ${icon(svg`<path d="M1 8.500h3.500L10 3.500v17l-5.500-5H1z" stroke=${w} stroke-width="1.300"/><path d="M13 9.500q2 2.500 0 5" stroke=${w} stroke-width="1.300"/><path d="M16 7q4 5 0 10M19 4.500q6 7.500 0 15" stroke="#8e898a" stroke-width="1.200"/>`)}
        ${icon(svg`<path d="M1 21C1 10 9 2 20 2M5.500 21C5.500 13 12 7 20 6.500M10 21c0-5.500 4-9.500 10-10M14 21c0-3 2-5.500 6-6" stroke="#d8d5d6" stroke-width="1.300"/><circle cx="18.300" cy="20" r="1.700" fill=${w}/>`, 22)}
        ${icon(svg`<path d="M6.500 7.500H23v11H6.500v-5M24.500 11v4" stroke=${w} stroke-width="1.400"/><path d="M9 9.500h12v7H9z" fill=${w}/><path d="M.8 4.500h6V8a3 3 0 0 1-6 0zM2.500 2v2.500M5 2v2.500M3.800 11v4H7" stroke=${w} stroke-width="1.200"/>`)}
        ${icon(svg`<path d="M8 14L17 1.500l2.500 1.700L12 16l-5 6-1-1z" stroke=${w} stroke-width="1.300"/><path d="M9 13c-6-2-9 4-7 6.500s9-1 9-5M15 9c7 0 9 3 4 6" stroke=${w} stroke-width="1.300"/>`, 22)}
        ${icon(svg`<path d="M1 1h18v18H1zM1 13.500h18M10 13.500V19" stroke=${w} stroke-width="1.400"/>`, 19, "0 0 20 20")}
        <span class="time">1:05 PM</span>
        ${icon(svg`<path d="M0 0h24v14l-5 5h-6l-3 3v-3H0z" fill=${w}/><path d="M4 5h16M4 9.500h16M4 14h9" stroke="#484143" stroke-width="1.500"/><path d="M19 12.500a6 6 0 1 1-6.500 8.500c4 1 7.500-3 6.500-8.500z" fill=${w} stroke="#484143" stroke-width="1.300"/>`)}
        <span class="edge"></span>
      </div></div>`;
  }

  render() {
    return html`<div class="screen">
      ${this.strip()}${this.toolbar()}
      <main class="page"><section class="card">
        <h1>Kybi's Multipurpose Calculator</h1>
        <div class="out">${this.shown}</div>
        <div class="pad">${keys.map(k => html`<button class=${k.k}>${k.t[0] === "√" ? html`<span class="root">√</span>${k.t.slice(1)}` : k.t}</button>`)}</div>
      </section></main>
      ${this.taskbar()}
      <div class="float">
        <div class="round">${icon(svg`<path d="M1.500 4h11M7 1.500V4M3 12c4-1.500 6.500-4 7.500-7.500M3.500 6c1.500 3 4 5 8 6M15.500 1.500h3a3.500 3.500 0 0 1 3.500 3.500v2.500M1.500 16v2.500a3.500 3.500 0 0 0 3.500 3.500h2.500M13 22.500l4.700-11 4.800 11M14.500 19.500h6.500" stroke="#a8a8ae" stroke-width="1.900"/>`)}</div>
        <div class="round">${icon(svg`<path d="M10.500 10.500H6a4.500 4.500 0 1 1 4.500-4.500zM13.500 10.500H18a4.500 4.500 0 1 0-4.500-4.500zM10.500 13.500H6a4.500 4.500 0 1 0 4.500 4.500zM13.500 13.500H18a4.500 4.500 0 1 1-4.500 4.500z" stroke="#a8a8ae" stroke-width="1.900"/>`)}</div>
        <div class="chat">${icon(face, 36)}</div>
      </div>
      <div class="corner"><svg width="72" height="62" viewBox="0 0 72 62">${blackbox}</svg><div class="lobe">${icon(brain, 32)}</div></div>
    </div>`;
  }
}
